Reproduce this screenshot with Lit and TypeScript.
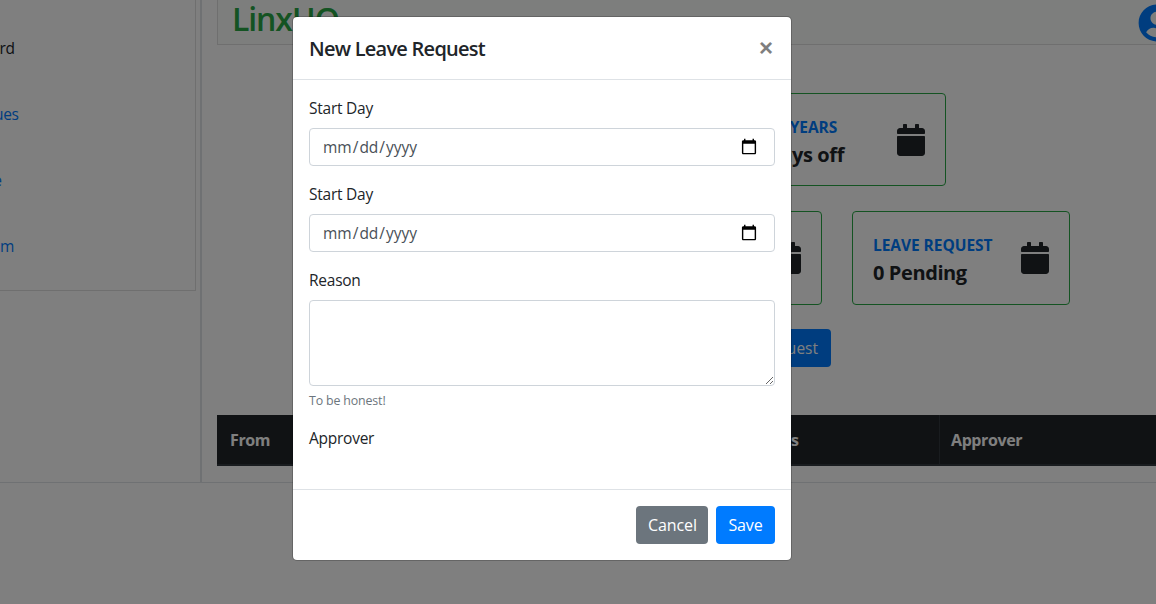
import { LitElement, html, css, svg } from "lit";
import { customElement } from "lit/decorators.js";

const calendarIcon = svg`<svg class="cal" viewBox="0 0 448 512" fill="currentColor"><path d="M12 192h424c6.600 0 12 5.400 12 12v260c0 26.500-21.500 48-48 48H48c-26.500 0-48-21.500-48-48V204c0-6.600 5.400-12 12-12zm436-44v-36c0-26.500-21.500-48-48-48h-48V12c0-6.600-5.400-12-12-12h-40c-6.600 0-12 5.400-12 12v52H160V12c0-6.600-5.400-12-12-12h-40c-6.600 0-12 5.400-12 12v52H48C21.500 64 0 85.500 0 112v36c0 6.600 5.400 12 12 12h424c6.600 0 12-5.400 12-12z"/></svg>`;

@customElement("app-root")
export class AppRoot extends LitElement {
  static styles = css`
    :host {
      display: block;
      position: relative;
      width: 1156px;
      height: 604px;
      overflow: hidden;
      background: #fff;
      font-family: "Open Sans", "Noto Sans", sans-serif;
      font-size: 15.5px;
      letter-spacing: -0.25px;
      line-height: 24px;
      color: #212529;
    }

    .page {
      display: flex;
      height: 483px;
      border-bottom: 1px solid #dee2e6;
      box-sizing: border-box;
    }

    .side-col {
      width: 200px;
      flex: none;
      border-right: 2px solid #dee2e6;
      box-sizing: content-box;
    }

    .sidebar {
      width: 196px;
      height: 291px;
      box-sizing: border-box;
      border: 1px solid #dfdfdf;
      border-width: 0 1px 1px 0;
      padding-top: 36px;
      display: flex;
      flex-direction: column;
      gap: 42px;
      white-space: nowrap;
      overflow: hidden;
    }

    .sidebar a {
      display: block;
      color: #007bff;
    }

    .sidebar a:nth-child(1) {
      margin-left: -63px;
    }

    .sidebar a:nth-child(2) {
      margin-left: -57px;
    }

    .sidebar a:nth-child(3) {
      margin-left: -64px;
    }

    .sidebar a:nth-child(4) {
      margin-left: -56px;
    }

    .sidebar a.active {
      color: #212529;
    }

    .main {
      flex: 1;
      min-width: 0;
      padding-left: 15px;
    }

    .topbar {
      height: 45px;
      box-sizing: border-box;
      border: 1px solid #dfdfdf;
      border-width: 0 0 1px 1px;
      background: #fafdfa;
      display: flex;
      justify-content: space-between;
      padding-left: 14px;
      overflow: hidden;
    }

    .brand {
      font-size: 32px;
      line-height: 38px;
      font-weight: 600;
      letter-spacing: -1.1px;
      color: #28a745;
    }

    .avatar {
      width: 38px;
      height: 38px;
      margin: 4px -20px 0 0;
      color: #007bff;
      flex: none;
    }

    .cards {
      padding-top: 48px;
      display: flex;
      flex-direction: column;
      gap: 25px;
    }

    .row {
      display: flex;
      gap: 30px;
    }

    .row.first {
      padding-left: 423px;
    }

    .row.second {
      padding-left: 387px;
    }

    .card {
      box-sizing: border-box;
      height: 94px;
      border: 1px solid #28a745;
      border-radius: 4px;
      display: flex;
      align-items: center;
      justify-content: space-between;
      padding: 0 20px;
      width: 218px;
    }

    .row.first .card {
      width: 306px;
      height: 93px;
    }

    .row.first .card .text {
      margin: 1px 53px 0 auto;
    }

    .text {
      padding-top: 2px;
    }

    .card h6 {
      margin: 1px 0 5px;
      font-size: 15.5px;
      line-height: 21px;
      font-weight: 700;
      letter-spacing: -0.05px;
      color: #007bff;
      text-transform: uppercase;
      white-space: nowrap;
    }

    .card p {
      margin: 0;
      font-size: 20px;
      line-height: 24px;
      font-weight: 700;
      letter-spacing: -0.4px;
      white-space: nowrap;
    }

    .cal {
      width: 28px;
      height: 32px;
      color: #212529;
      flex: none;
    }

    .actions {
      display: flex;
      padding: 24px 0 0 387px;
    }

    .request {
      width: 227px;
      height: 38px;
      border: 0;
      border-radius: 4px;
      background: #007bff;
      color: #fff;
      font: inherit;
      text-align: right;
      padding: 0 13px;
    }

    .table-head {
      display: grid;
      grid-template-columns: 174px 173px 173px 202px 1fr;
      height: 51px;
      margin-top: 48px;
      background: #212529;
      color: #fff;
      font-size: 16px;
      font-weight: 700;
      letter-spacing: -0.4px;
      border-bottom: 2px solid #32383e;
      box-sizing: border-box;
    }

    .table-head div {
      padding: 13px 12px 0;
      border-left: 1px solid #32383e;
    }

    .table-head div:first-child {
      border-left: 0;
      padding-left: 13px;
    }

    .table-head div:last-child {
      padding-left: 11px;
    }

    .backdrop {
      position: absolute;
      inset: 0;
      background: rgba(0, 0, 0, 0.5);
    }

    .modal {
      position: absolute;
      left: 292px;
      top: 16px;
      width: 500px;
      height: 545px;
      box-sizing: border-box;
      display: flex;
      flex-direction: column;
      background: #fff;
      border: 1px solid rgba(0, 0, 0, 0.2);
      border-radius: 5px;
      background-clip: padding-box;
    }

    .modal-header {
      height: 63px;
      flex: none;
      box-sizing: border-box;
      display: flex;
      justify-content: space-between;
      align-items: center;
      padding: 2px 16px 0;
      border-bottom: 1px solid #dee2e6;
    }

    .modal-header h5 {
      margin: 0;
      font-size: 20px;
      line-height: 30px;
      font-weight: 600;
      letter-spacing: -0.75px;
    }

    .close {
      border: 0;
      padding: 0;
      margin: -2px 2px 0 0;
      background: none;
      font: 700 24px/24px "Liberation Sans", sans-serif;
      color: #7f7f7f;
    }

    .modal-body {
      flex: 1;
      padding: 16px;
    }

    .group {
      margin-bottom: 16px;
    }

    label {
      display: block;
      margin-bottom: 8px;
    }

    input,
    textarea {
      display: block;
      width: 100%;
      box-sizing: border-box;
      padding: 6px 12px;
      font: inherit;
      letter-spacing: 0;
      color: #495057;
      background: #fff;
      border: 1px solid #ced4da;
      border-radius: 4px;
      margin: 0;
    }

    input {
      height: 38px;
    }

    input::-webkit-calendar-picker-indicator {
      width: 18px;
      height: 18px;
      margin-right: 4px;
      padding: 0;
    }

    textarea {
      height: 86px;
    }

    small {
      display: block;
      margin-top: 6px;
      font-size: 12.4px;
      line-height: 18px;
      letter-spacing: -0.15px;
      color: #6c757d;
    }

    .modal-footer {
      height: 71px;
      flex: none;
      box-sizing: border-box;
      display: flex;
      justify-content: flex-end;
      align-items: center;
      gap: 8px;
      padding: 0 16px;
      border-top: 1px solid #dee2e6;
    }

    .btn {
      height: 38px;
      border: 0;
      border-radius: 4px;
      padding: 0 12px;
      font: inherit;
      font-size: 16px;
      letter-spacing: -0.1px;
      color: #fff;
    }

    .btn.cancel {
      width: 72px;
      background: #6c757d;
    }

    .btn.save {
      width: 59px;
      background: #007bff;
    }
  `;

  render() {
    return html`
      <div class="page">
        <div class="side-col">
          <nav class="sidebar">
            <a class="active">Dashboard</a>
            <a>Colleagues</a>
            <a>My Leave</a>
            <a>Our Team</a>
          </nav>
        </div>
        <div class="main">
          <header class="topbar">
            <div class="brand">LinxHQ</div>
            <svg class="avatar" viewBox="0 0 496 512" fill="currentColor">
              <path d="M248 8C111 8 0 119 0 256s111 248 248 248 248-111 248-248S385 8 248 8zm0 96c48.600 0 88 39.400 88 88s-39.400 88-88 88-88-39.400-88-88 39.400-88 88-88zm0 344c-58.700 0-111.300-26.600-146.500-68.200 18.800-35.400 55.600-59.800 98.500-59.800 2.400 0 4.800.4 7.100 1.100 13 4.200 26.600 6.900 40.900 6.900 14.300 0 28-2.700 40.900-6.900 2.300-.7 4.700-1.100 7.100-1.100 42.900 0 79.700 24.400 98.500 59.800C359.300 421.400 306.700 448 248 448z"/>
            </svg>
          </header>
          <div class="cards">
            <div class="row first">
              <div class="card">
                <div class="text">
                  <h6>Leave years</h6>
                  <p>12 Days off</p>
                </div>
                ${calendarIcon}
              </div>
            </div>
            <div class="row second">
              <div class="card">
                <div class="text">
                  <h6>Leave taken</h6>
                  <p>0 Days</p>
                </div>
                ${calendarIcon}
              </div>
              <div class="card">
                <div class="text">
                  <h6>Leave request</h6>
                  <p>0 Pending</p>
                </div>
                ${calendarIcon}
              </div>
            </div>
          </div>
          <div class="actions"><button class="request">New Leave Request</button></div>
          <div class="table-head">
            <div>From</div>
            <div>To</div>
            <div>Reason</div>
            <div>Status</div>
            <div>Approver</div>
          </div>
        </div>
      </div>
      <div class="backdrop"></div>
      <div class="modal">
        <div class="modal-header">
          <h5>New Leave Request</h5>
          <button class="close">×</button>
        </div>
        <div class="modal-body">
          <div class="group">
            <label>Start Day</label>
            <input type="date" />
          </div>
          <div class="group">
            <label>Start Day</label>
            <input type="date" />
          </div>
          <div class="group">
            <label>Reason</label>
            <textarea></textarea>
            <small>To be honest!</small>
          </div>
          <div class="group">
            <label>Approver</label>
          </div>
        </div>
        <div class="modal-footer">
          <button class="btn cancel">Cancel</button>
          <button class="btn save">Save</button>
        </div>
      </div>
    `;
  }
}
